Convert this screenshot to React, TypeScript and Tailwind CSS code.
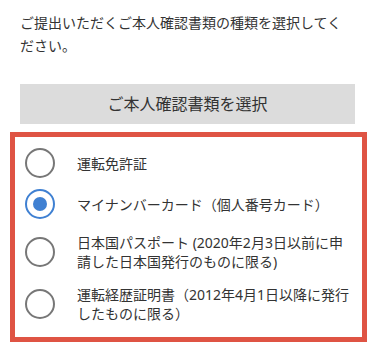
import React from "react";

const font = { fontFamily: '"Noto Sans", "Noto Sans CJK JP", sans-serif' };

type Option = { id: string; lines: string[]; h: string };

const options: Option[] = [
  { id: "license", lines: ["運転免許証"], h: "h-[40px]" },
  { id: "mynumber", lines: ["マイナンバーカード（個人番号カード）"], h: "h-[42px]" },
  {
    id: "passport",
    lines: ["日本国パスポート (2020年2月3日以前に申", "請した日本国発行のものに限る)"],
    h: "h-[54px]",
  },
  {
    id: "history",
    lines: ["運転経歴証明書（2012年4月1日以降に発行", "したものに限る）"],
    h: "h-[50px]",
  },
];

function Radio({ checked }: { checked: boolean }) {
  if (checked) {
    return (
      <span className="flex h-[30px] w-[30px] shrink-0 items-center justify-center rounded-full border-[2.5px] border-[#3f80d2]">
        <span className="h-[14px] w-[14px] rounded-full bg-[#3f80d2]" />
      </span>
    );
  }
  return <span className="block h-[30px] w-[30px] shrink-0 rounded-full border-2 border-[#777777]" />;
}

export default function App() {
  const selected = "mynumber";
  return (
    <div className="h-[345px] w-[376px] overflow-hidden bg-white text-[#333333]" style={font}>
      <p className="whitespace-nowrap pl-5 pt-[11px] text-[14px] leading-[23px]">
        ご提出いただくご本人確認書類の種類を選択してく
        <br />
        ださい。
      </p>

      <div className="ml-5 mt-[27px] flex h-10 w-[335px] items-center justify-center bg-[#dcdcdc] text-[16px]">
        ご本人確認書類を選択
      </div>

      <div className="ml-[10px] mt-2 w-[357px] border-[5px] border-[#df5444] pb-2 pt-[6px]">
        {options.map((o) => (
          <div key={o.id} className={`flex items-center pl-[10px] ${o.h}`}>
            <Radio checked={o.id === selected} />
            <div className="ml-[22px] whitespace-nowrap text-[14px] leading-[19px]">
              {o.lines.map((l, i) => (
                <div key={i}>{l}</div>
              ))}
            </div>
          </div>
        ))}
      </div>
    </div>
  );
}
